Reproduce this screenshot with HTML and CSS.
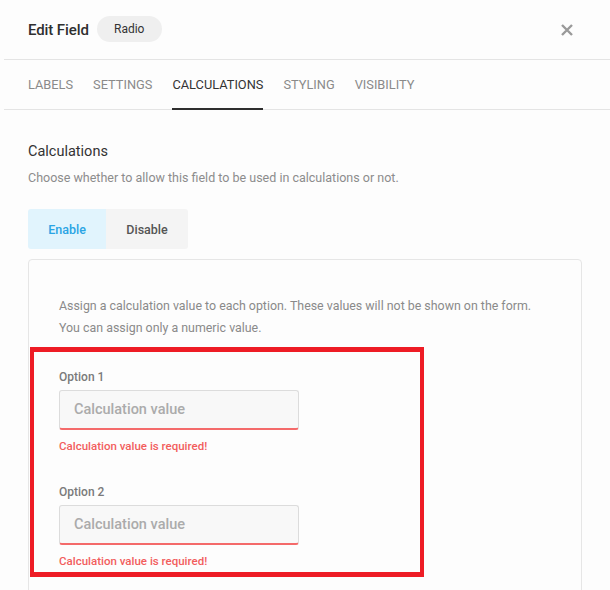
FILE: index.html
```html
<!DOCTYPE html>
<html lang="en">
<head>
<meta charset="utf-8">
<title>Edit Field</title>
<link rel="stylesheet" href="styles.css">
</head>
<body>
<div class="modal">
  <header class="modal-header">
    <h1 class="title">Edit Field</h1>
    <span class="pill">Radio</span>
    <button class="close" aria-label="Close">
      <svg width="12" height="12" viewBox="0 0 12 12"><path d="M1 1L11 11M11 1L1 11" stroke="#9a9a9a" stroke-width="2.4" stroke-linecap="butt"/></svg>
    </button>
  </header>
  <nav class="tabs">
    <span class="tab">LABELS</span>
    <span class="tab">SETTINGS</span>
    <span class="tab active">CALCULATIONS</span>
    <span class="tab">STYLING</span>
    <span class="tab">VISIBILITY</span>
  </nav>
  <section class="content">
    <h2 class="heading">Calculations</h2>
    <p class="desc">Choose whether to allow this field to be used in calculations or not.</p>
    <div class="toggle">
      <span class="toggle-btn on">Enable</span>
      <span class="toggle-btn">Disable</span>
    </div>
    <div class="card">
      <p class="card-text">Assign a calculation value to each option. These values will not be shown on the form.<br>You can assign only a numeric value.</p>
      <div class="option">
        <label class="opt-label">Option 1</label>
        <div class="field"><span class="ph">Calculation value</span></div>
        <div class="error">Calculation value is required!</div>
      </div>
      <div class="option">
        <label class="opt-label">Option 2</label>
        <div class="field"><span class="ph">Calculation value</span></div>
        <div class="error">Calculation value is required!</div>
      </div>
    </div>
  </section>
</div>
<div class="highlight"></div>
</body>
</html>
```
FILE: styles.css
```css
html, body {
  margin: 0;
  padding: 0;
  background: #fdfdfd;
  font-family: Roboto, "Liberation Sans", Arial, sans-serif;
  overflow: hidden;
  height: 590px;
}
.modal {
  margin-left: 4px;
}
.modal-header {
  height: 59px;
  border-bottom: 1px solid #e4e4e4;
  display: flex;
  align-items: center;
  padding: 0 28px 0 24px;
}
.title {
  margin: 0;
  font-size: 15px;
  font-weight: 500;
  color: #2f2f2f;
  letter-spacing: -0.1px;
}
.pill {
  margin-left: 8px;
  height: 26px;
  width: 65px;
  border-radius: 13px;
  background: #efefef;
  color: #333;
  font-size: 12px;
  display: flex;
  align-items: center;
  justify-content: center;
  margin-top: -1px;
}
.close {
  margin-left: auto;
  margin-right: 9px;
  border: 0;
  background: none;
  padding: 0;
  width: 12px;
  height: 12px;
  display: flex;
}
.tabs {
  height: 49px;
  border-bottom: 1px solid #e4e4e4;
  display: flex;
  gap: 20px;
  padding-left: 24px;
}
.tab {
  position: relative;
  display: flex;
  align-items: center;
  font-size: 12.8px;
  color: #8a8a8a;
}
.tab.active {
  color: #333;
}
.tab.active::after {
  content: "";
  position: absolute;
  left: 0;
  right: 0;
  bottom: -1px;
  height: 2px;
  background: #2e2e2e;
}
.content {
  padding: 32px 28px 0 24px;
}
.heading {
  margin: 0;
  font-size: 14.5px;
  line-height: 20px;
  font-weight: 400;
  color: #333;
}
.desc {
  margin: 7px 0 0;
  font-size: 12.5px;
  line-height: 18px;
  color: #8c8c8c;
}
.toggle {
  display: flex;
  margin-top: 22px;
}
.toggle-btn {
  height: 40px;
  display: flex;
  align-items: center;
  justify-content: center;
  font-size: 12.5px;
  font-weight: 500;
  color: #555;
  background: #f4f4f4;
  width: 82px;
  border-radius: 0 3px 3px 0;
}
.toggle-btn.on {
  width: 78px;
  background: #e1f4fd;
  color: #2aa4e4;
  border-radius: 3px 0 0 3px;
}
.card {
  margin-top: 10px;
  border: 1px solid #e6e6e6;
  border-radius: 4px;
  padding: 35px 30px 60px 30px;
  background: #fdfdfd;
}
.card-text {
  margin: 0;
  font-size: 12.4px;
  line-height: 22px;
  color: #8a8a8a;
}
.option {
  margin-top: 30px;
}
.opt-label {
  display: block;
  font-size: 12px;
  line-height: 16px;
  font-weight: 500;
  color: #7a7a7a;
}
.field {
  margin-top: 5px;
  width: 240px;
  height: 40px;
  box-sizing: border-box;
  border: 1px solid #dcdcdc;
  border-bottom: 2px solid #f46a6a;
  border-radius: 3px;
  background: #f8f8f8;
  display: flex;
  align-items: center;
  padding-left: 14px;
}
.ph {
  font-size: 14.5px;
  font-weight: 500;
  color: #ababab;
}
.error {
  margin-top: 8px;
  font-size: 11.5px;
  line-height: 16px;
  font-weight: 500;
  color: #f25d5d;
}
.highlight {
  position: absolute;
  left: 30px;
  top: 347px;
  width: 394px;
  height: 230px;
  box-sizing: border-box;
  border: 4px solid #ee1c25;
  border-top-width: 5px;
  border-bottom-width: 5px;
  pointer-events: none;
}
```
